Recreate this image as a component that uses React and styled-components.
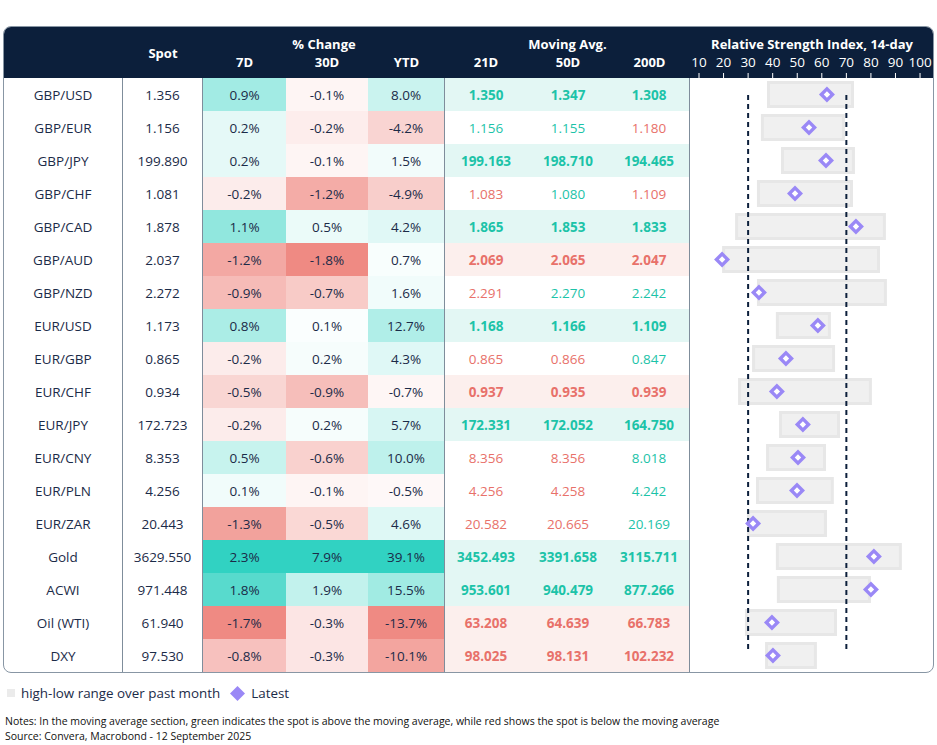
import React from 'react';
import styled, { createGlobalStyle } from 'styled-components';

const NAVY = '#0c1f3b';
const INK = '#1b2b48';
const TEAL = '#1cc3a8';
const RED = '#e8716a';
const PURPLE = '#9a88f6';

// name, spot, [7D, 30D, YTD], moving averages, tone per MA (g = spot above), RSI [low, high, latest]
const rows = [
  ['GBP/USD', '1.356', [0.9, -0.1, 8.0], ['1.350', '1.347', '1.308'], 'ggg', [37.7, 73.1, 62.1]],
  ['GBP/EUR', '1.156', [0.2, -0.2, -4.2], ['1.156', '1.155', '1.180'], 'ggr', [35.2, 69.4, 54.8]],
  ['GBP/JPY', '199.890', [0.2, -0.1, 1.5], ['199.163', '198.710', '194.465'], 'ggg', [43.4, 73.5, 61.7]],
  ['GBP/CHF', '1.081', [-0.2, -1.2, -4.9], ['1.083', '1.080', '1.109'], 'rgr', [33.6, 72.7, 49.1]],
  ['GBP/CAD', '1.878', [1.1, 0.5, 4.2], ['1.865', '1.853', '1.833'], 'ggg', [24.7, 86.1, 73.9]],
  ['GBP/AUD', '2.037', [-1.2, -1.8, 0.7], ['2.069', '2.065', '2.047'], 'rrr', [19.4, 83.7, 19.4]],
  ['GBP/NZD', '2.272', [-0.9, -0.7, 1.6], ['2.291', '2.270', '2.242'], 'rgg', [33.6, 86.5, 34.4]],
  ['EUR/USD', '1.173', [0.8, 0.1, 12.7], ['1.168', '1.166', '1.109'], 'ggg', [41.3, 63.7, 58.4]],
  ['EUR/GBP', '0.865', [-0.2, 0.2, 4.3], ['0.865', '0.866', '0.847'], 'rrg', [31.6, 65.4, 45.4]],
  ['EUR/CHF', '0.934', [-0.5, -0.9, -0.7], ['0.937', '0.935', '0.939'], 'rrr', [25.9, 80.4, 41.7]],
  ['EUR/JPY', '172.723', [-0.2, 0.2, 5.7], ['172.331', '172.052', '164.750'], 'ggg', [42.6, 67.4, 52.3]],
  ['EUR/CNY', '8.353', [0.5, -0.6, 10.0], ['8.356', '8.356', '8.018'], 'rrg', [37.3, 61.7, 50.3]],
  ['EUR/PLN', '4.256', [0.1, -0.1, -0.5], ['4.256', '4.258', '4.242'], 'rrg', [33.2, 64.9, 49.9]],
  ['EUR/ZAR', '20.443', [-1.3, -0.5, 4.6], ['20.582', '20.665', '20.169'], 'rrg', [29.5, 62.1, 32.0]],
  ['Gold', '3629.550', [2.3, 7.9, 39.1], ['3452.493', '3391.658', '3115.711'], 'ggg', [41.3, 92.6, 81.2]],
  ['ACWI', '971.448', [1.8, 1.9, 15.5], ['953.601', '940.479', '877.266'], 'ggg', [41.7, 80.0, 80.0]],
  ['Oil (WTI)', '61.940', [-1.7, -0.3, -13.7], ['63.208', '64.639', '66.783'], 'rrr', [28.7, 66.2, 39.7]],
  ['DXY', '97.530', [-0.8, -0.3, -10.1], ['98.025', '98.131', '102.232'], 'rrr', [36.9, 58.0, 40.1]],
];

const ROW_H = 33;
const CHART_W = 244;
const scaleX = (v) => 9 + (v - 10) * 2.456;

const hexToRgb = (h) => [1, 3, 5].map((i) => parseInt(h.slice(i, i + 2), 16));
const mix = (a, b, t) => {
  const ca = hexToRgb(a);
  const cb = hexToRgb(b);
  return `rgb(${ca.map((c, i) => Math.round(c + (cb[i] - c) * t)).join(',')})`;
};

// per column extremes for the heat map
const extremes = [0, 1, 2].map((k) => {
  const vals = rows.map((r) => r[2][k]);
  return [Math.min(...vals), Math.max(...vals)];
});

const heat = (v, k) => {
  const [min, max] = extremes[k];
  if (v >= 0) return mix('#ffffff', '#31d2c2', Math.pow(v / max, 0.85));
  return mix('#ffffff', '#ef8a83', Math.pow(v / min, 0.85));
};

const GlobalStyle = createGlobalStyle`
  * { box-sizing: border-box; }
  body {
    margin: 0;
    background: #fff;
    font-family: "Open Sans", "Noto Sans", sans-serif;
  }
`;

const Page = styled.div`
  width: 937px;
  padding: 26px 3px 0 3px;
`;

const Table = styled.div`
  display: grid;
  grid-template-columns: 119px 80px 83px 82px 77px 82px 82px 81px 1fr;
  grid-template-rows: 26px 25px repeat(18, ${ROW_H}px);
  width: 931px;
  border: 1px solid #8896a4;
  border-radius: 8px;
  overflow: hidden;
`;

const HeadCell = styled.div`
  grid-column: span ${(p) => p.$cols || 1};
  grid-row: span ${(p) => p.$rows || 1};
  display: flex;
  justify-content: center;
  align-items: ${(p) => p.$align || 'center'};
  background: ${NAVY};
  color: #fff;
  font-size: 13px;
  font-weight: 700;
  line-height: 18px;
  white-space: nowrap;
`;

const Cell = styled.div`
  display: flex;
  align-items: center;
  justify-content: center;
  font-size: 13.5px;
  color: ${INK};
  background: ${(p) => p.$bg || 'transparent'};
  border-right: ${(p) => (p.$divider ? '1px solid #7f8d9b' : 'none')};
`;

const MaCell = styled(Cell)`
  color: ${(p) => (p.$tone === 'g' ? TEAL : RED)};
  font-weight: ${(p) => (p.$bold ? 700 : 400)};
`;

const ChartCell = styled.div`
  grid-column: 9;
  grid-row: 3 / span 18;
`;

const Legend = styled.div`
  display: flex;
  align-items: center;
  margin: 11px 0 0 4px;
  font-size: 13.4px;
  line-height: 18px;
  color: ${INK};
`;

const Swatch = styled.span`
  width: 8px;
  height: 8px;
  background: #ebebeb;
  margin-right: 6px;
`;

const LegendLabel = styled.span`
  margin-right: ${(p) => p.$gap || 0}px;
`;

const Notes = styled.div`
  margin: 12px 0 0 2px;
  font-size: 10.5px;
  line-height: 15px;
  color: #111;
`;

const Diamond = ({ x, y, size = 16 }) => {
  const h = size / 2;
  return (
    <g>
      <polygon points={`${x},${y - h} ${x + h},${y} ${x},${y + h} ${x - h},${y}`} fill={PURPLE} />
      <polygon points={`${x},${y - 3.2} ${x + 3.2},${y} ${x},${y + 3.2} ${x - 3.2},${y}`} fill="#fff" />
    </g>
  );
};

const Axis = () => (
  <svg width={CHART_W} height={25} style={{ display: 'block' }}>
    {[10, 20, 30, 40, 50, 60, 70, 80, 90, 100].map((v) => (
      <g key={v}>
        <text
          x={scaleX(v)}
          y={14}
          fill="#fff"
          fontSize="13.5"
          fontWeight="400"
          textAnchor="middle"
          fontFamily='"Open Sans", sans-serif'
        >
          {v}
        </text>
        <line x1={scaleX(v)} x2={scaleX(v)} y1={20} y2={25} stroke="#fff" strokeWidth="1" />
      </g>
    ))}
  </svg>
);

const RsiChart = () => {
  const h = rows.length * ROW_H;
  return (
    <svg width={CHART_W} height={h} style={{ display: 'block' }}>
      {rows.map((r, i) => {
        const [lo, hi] = r[5];
        return (
          <rect
            key={r[0]}
            x={scaleX(lo) + 1.5}
            y={i * ROW_H + 4.5}
            width={scaleX(hi) - scaleX(lo) - 3}
            height={24}
            fill="#f0f0f0"
            stroke="#e7e7e7"
            strokeWidth="3"
          />
        );
      })}
      {[30, 70].map((v) => (
        <line
          key={v}
          x1={scaleX(v)}
          x2={scaleX(v)}
          y1={17}
          y2={h - 20}
          stroke={NAVY}
          strokeWidth="2"
          strokeDasharray="5 4"
        />
      ))}
      {rows.map((r, i) => (
        <Diamond key={r[0]} x={scaleX(r[5][2])} y={i * ROW_H + ROW_H / 2} />
      ))}
    </svg>
  );
};

const fmtPct = (v) => `${v.toFixed(1)}%`;

export default function App() {
  return (
    <Page>
      <GlobalStyle />
      <Table>
        <HeadCell $rows={2} />
        <HeadCell $rows={2}>Spot</HeadCell>
        <HeadCell $cols={3} $align="flex-end">% Change</HeadCell>
        <HeadCell $cols={3} $align="flex-end">Moving Avg.</HeadCell>
        <HeadCell $align="flex-end">Relative Strength Index, 14-day</HeadCell>
        <HeadCell $align="flex-start">7D</HeadCell>
        <HeadCell $align="flex-start">30D</HeadCell>
        <HeadCell $align="flex-start">YTD</HeadCell>
        <HeadCell $align="flex-start">21D</HeadCell>
        <HeadCell $align="flex-start">50D</HeadCell>
        <HeadCell $align="flex-start">200D</HeadCell>
        <HeadCell $align="flex-start">
          <Axis />
        </HeadCell>

        <ChartCell>
          <RsiChart />
        </ChartCell>

        {rows.map(([name, spot, pct, ma, tones]) => {
          const uniform = tones === 'ggg' || tones === 'rrr';
          const rowBg = uniform ? (tones === 'ggg' ? '#e3f7f4' : '#fcefed') : undefined;
          return (
            <React.Fragment key={name}>
              <Cell $divider>{name}</Cell>
              <Cell $divider>{spot}</Cell>
              {pct.map((v, k) => (
                <Cell key={k} $bg={heat(v, k)} $divider={k === 2}>
                  {fmtPct(v)}
                </Cell>
              ))}
              {ma.map((v, k) => (
                <MaCell key={k} $tone={tones[k]} $bold={uniform} $bg={rowBg} $divider={k === 2}>
                  {v}
                </MaCell>
              ))}
            </React.Fragment>
          );
        })}
      </Table>

      <Legend>
        <Swatch />
        <LegendLabel $gap={10}>high-low range over past month</LegendLabel>
        <svg width={15} height={15} style={{ marginRight: 6 }}>
          <polygon points="7.5,0 15,7.5 7.5,15 0,7.5" fill={PURPLE} />
        </svg>
        <LegendLabel>Latest</LegendLabel>
      </Legend>

      <Notes>
        Notes: In the moving average section, green indicates the spot is above the moving average, while red shows the spot is below the moving average
        <br />
        Source: Convera, Macrobond - 12 September 2025
      </Notes>
    </Page>
  );
}
